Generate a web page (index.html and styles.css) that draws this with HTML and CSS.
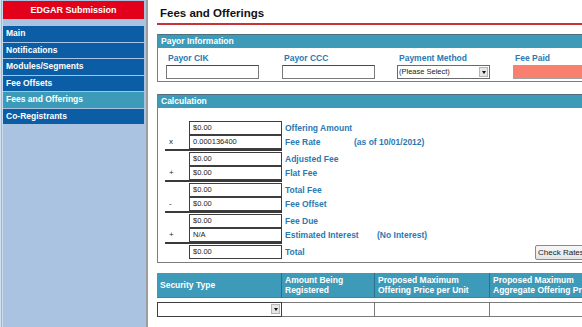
FILE: index.html
```html
<!DOCTYPE html>
<html lang="en">
<head>
<meta charset="utf-8">
<title>EDGAR Submission - Fees and Offerings</title>
<link rel="stylesheet" href="styles.css">
</head>
<body>
<div class="page">
  <aside class="sidebar">
    <div class="brand">EDGAR Submission</div>
    <ul class="nav">
      <li class="nav-item">Main</li>
      <li class="nav-item">Notifications</li>
      <li class="nav-item">Modules/Segments</li>
      <li class="nav-item">Fee Offsets</li>
      <li class="nav-item is-active">Fees and Offerings</li>
      <li class="nav-item">Co-Registrants</li>
    </ul>
  </aside>

  <main class="main">
    <h1 class="title">Fees and Offerings</h1>

    <section class="panel">
      <div class="panel-head">Payor Information</div>
      <div class="payor">
        <div class="field">
          <div class="lbl field-lbl">Payor CIK</div>
          <div class="input"></div>
        </div>
        <div class="field">
          <div class="lbl field-lbl">Payor CCC</div>
          <div class="input"></div>
        </div>
        <div class="field">
          <div class="lbl field-lbl">Payment Method</div>
          <div class="select"><span class="select-text">(Please Select)</span><span class="arrow"></span></div>
        </div>
        <div class="field">
          <div class="lbl field-lbl">Fee Paid</div>
          <div class="input fee-paid"></div>
        </div>
      </div>
    </section>

    <section class="panel calc-panel">
      <div class="panel-head">Calculation</div>
      <div class="calc">
        <div class="group">
          <span class="op"></span>
          <div class="cin">$0.00</div>
          <span class="lbl clbl">Offering Amount</span>
          <span class="op">x</span>
          <div class="cin">0.000136400</div>
          <span class="lbl clbl"><span class="lbl-rate">Fee Rate</span>(as of 10/01/2012)</span>
          <span class="rule"></span>
        </div>
        <div class="group">
          <span class="op"></span>
          <div class="cin">$0.00</div>
          <span class="lbl clbl">Adjusted Fee</span>
          <span class="op">+</span>
          <div class="cin">$0.00</div>
          <span class="lbl clbl">Flat Fee</span>
          <span class="rule"></span>
        </div>
        <div class="group">
          <span class="op"></span>
          <div class="cin">$0.00</div>
          <span class="lbl clbl">Total Fee</span>
          <span class="op">-</span>
          <div class="cin">$0.00</div>
          <span class="lbl clbl">Fee Offset</span>
          <span class="rule"></span>
        </div>
        <div class="group">
          <span class="op"></span>
          <div class="cin">$0.00</div>
          <span class="lbl clbl">Fee Due</span>
          <span class="op">+</span>
          <div class="cin">N/A</div>
          <span class="lbl clbl"><span class="lbl-int">Estimated Interest</span>(No Interest)</span>
          <span class="rule"></span>
        </div>
        <div class="total-row">
          <span class="op"></span>
          <div class="cin">$0.00</div>
          <span class="lbl clbl">Total</span>
          <button class="btn" type="button">Check Rates</button>
        </div>
      </div>
    </section>

    <div class="sec-table">
      <div class="th">Security Type</div>
      <div class="th">Amount Being<br>Registered</div>
      <div class="th">Proposed Maximum<br>Offering Price per Unit</div>
      <div class="th">Proposed Maximum<br>Aggregate Offering Price</div>
      <div class="td td-first"><div class="select select-wide"><span class="select-text"></span><span class="arrow"></span></div></div>
      <div class="td"></div>
      <div class="td"></div>
      <div class="td"></div>
    </div>
  </main>
</div>
</body>
</html>
```

FILE: styles.css
```css
* { box-sizing: border-box; }

html, body {
  margin: 0;
  padding: 0;
  height: 100%;
}

body {
  font-family: "Liberation Sans", Arial, sans-serif;
  background: #ffffff;
  overflow: hidden;
}

.page {
  display: flex;
  width: 582px;
  height: 327px;
  overflow: hidden;
}

/* ---------- Sidebar ---------- */
.sidebar {
  flex: 0 0 148px;
  width: 148px;
  padding: 1px 2px 0 3px;
  background: linear-gradient(to right, #d3e2f2 0, #d3e2f2 1px, #9db6d3 1px, #9db6d3 2px, #c9dbee 2px, #c9dbee 3px, #a9c3e1 3px);
  border-right: 2px solid #9c9c9c;
}

.brand {
  height: 18px;
  line-height: 18px;
  background: #e3001b;
  color: #ffffff;
  font-weight: bold;
  font-size: 9px;
  text-align: center;
}

.nav {
  list-style: none;
  margin: 7px 0 0;
  padding: 0;
}

.nav-item {
  height: 15.5px;
  line-height: 15.5px;
  margin-bottom: 1px;
  padding-left: 3px;
  background: #0b5ea5;
  color: #ffffff;
  font-weight: bold;
  font-size: 8.5px;
  white-space: nowrap;
}

.nav-item.is-active {
  background: #3c9bb9;
}

/* ---------- Main ---------- */
.main {
  flex: 0 0 auto;
  width: 520px;
  padding: 0 0 0 9px;
  background: #ffffff;
}

.title {
  margin: 0;
  padding: 6px 3px 3px;
  line-height: 14px;
  font-size: 11.5px;
  font-weight: bold;
  color: #111111;
  border-bottom: 2px solid #c8323a;
}

.panel {
  margin-top: 9px;
  width: 500px;
  border: 1px solid #7d7d7d;
  border-top-color: #4f6f7c;
}

.panel-head {
  height: 13px;
  line-height: 13px;
  padding-left: 3px;
  background: #3d9bb9;
  color: #ffffff;
  font-weight: bold;
  font-size: 8.5px;
}

.lbl {
  color: #2a79b3;
  font-weight: bold;
  font-size: 8.5px;
}

/* ---------- Payor ---------- */
.payor {
  display: grid;
  grid-template-columns: 116px 115px 116px 150px;
  padding: 5px 0 2px 8px;
}

.field-lbl {
  height: 11px;
  line-height: 11px;
  padding-left: 2px;
  margin-bottom: 1px;
}

.input {
  width: 93px;
  height: 14px;
  border: 1px solid #7a7a7a;
  border-top-color: #4a4a4a;
  background: #ffffff;
}

.fee-paid {
  width: 140px;
  background: #f9806e;
  border-color: #a3a3a3;
}

.select {
  position: relative;
  width: 93px;
  height: 14px;
  border: 1px solid #6a6a6a;
  background: #ffffff;
  font-size: 7.5px;
  line-height: 12px;
  color: #222222;
  padding-left: 1px;
}

.select .arrow {
  position: absolute;
  right: 1px;
  top: 1px;
  width: 9px;
  height: 10px;
  background: #e6e6e6;
  border: 1px solid #b5b5b5;
}

.select .arrow::after {
  content: "";
  position: absolute;
  left: 1.5px;
  top: 3px;
  border-left: 2.5px solid transparent;
  border-right: 2.5px solid transparent;
  border-top: 3px solid #111111;
}

/* ---------- Calculation ---------- */
.calc-panel {
  margin-top: 12px;
}

.calc {
  padding: 13px 0 3px 7px;
}

.group {
  display: grid;
  grid-template-columns: 24px 93px 1fr;
  grid-template-rows: 14px 14px 2px;
  margin-bottom: 1px;
}

.op {
  font-size: 8px;
  line-height: 14px;
  padding-left: 4px;
  color: #222222;
}

.cin {
  height: 14px;
  border: 1px solid #3e3e3e;
  background: #ffffff;
  font-size: 7.5px;
  line-height: 12px;
  padding-left: 3px;
  color: #222222;
}

.clbl {
  line-height: 14px;
  padding-left: 3px;
  white-space: nowrap;
}

.lbl-rate {
  display: inline-block;
  width: 69px;
}

.lbl-int {
  display: inline-block;
  width: 92px;
}

.rule {
  grid-column: 1 / 3;
  background: #3a3a3a;
}

.total-row {
  display: grid;
  grid-template-columns: 24px 93px 253px 1fr;
  grid-template-rows: 14px;
  margin-top: 1px;
}

.btn {
  height: 15px;
  width: 60px;
  margin: 0;
  padding: 0 0 0 2px;
  text-align: left;
  font-family: "Liberation Sans", Arial, sans-serif;
  font-size: 8px;
  line-height: 13px;
  color: #222222;
  background: linear-gradient(#f7f7f7, #e4e4e4);
  border: 1px solid #8a8a8a;
  border-radius: 2px;
}

/* ---------- Security table ---------- */
.sec-table {
  margin-top: 10px;
  display: grid;
  grid-template-columns: 125px 93px 115px 170px;
  grid-template-rows: 25px 15px;
  row-gap: 4px;
}

.th {
  display: flex;
  align-items: center;
  padding-left: 3px;
  background: #3d9bb9;
  border-right: 1px solid #2b6f88;
  border-bottom: 1px solid #5a7a86;
  color: #ffffff;
  font-weight: bold;
  font-size: 8.5px;
  line-height: 10px;
  white-space: nowrap;
}

.td {
  border: 1px solid #7a7a7a;
  border-left: none;
}

.td-first {
  border: none;
}

.select-wide {
  width: 125px;
  height: 15px;
  border-color: #3e3e3e;
}
```
